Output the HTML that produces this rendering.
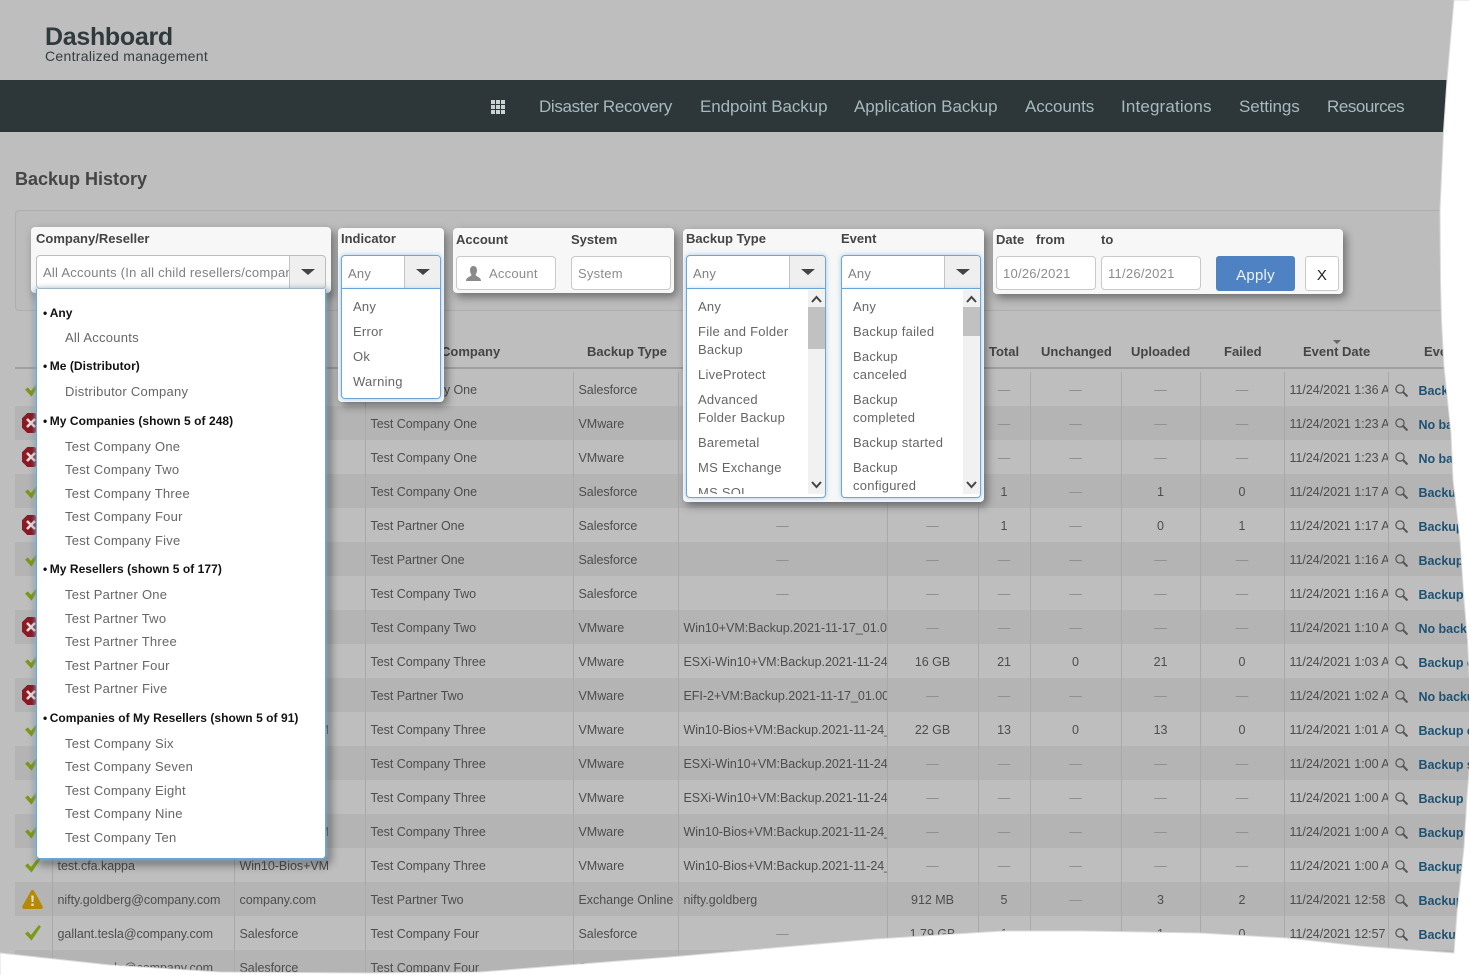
<!DOCTYPE html>
<html lang="en"><head><meta charset="utf-8"><title>Backup History</title>
<style>
html,body{margin:0;padding:0;background:#fff}
#p{position:relative;width:1469px;height:975px;overflow:hidden;background:#bebebe;font:13px/16px "Liberation Sans",sans-serif;letter-spacing:.25px;color:#4a4a4a}
.a,.t,.b,.l{position:absolute;white-space:nowrap}
.t{margin-top:1px}
.l{font-weight:bold;color:#444;font-size:13px;letter-spacing:0}
.b{font-weight:bold;color:#111;font-size:12px;letter-spacing:.05px;left:43px}
.g{color:#666}
#nav{left:0;top:80px;width:1469px;height:52px;background:#2d3739}
.n{position:absolute;top:97px;font-size:17px;line-height:20px;color:#a6babd;letter-spacing:0;white-space:nowrap}
table{position:absolute;left:15px;top:372px;border-collapse:collapse;table-layout:fixed;width:1455px;font-size:12.5px;letter-spacing:-.03px}
td{height:34px;padding:2px 0 0 5px;overflow:hidden;white-space:nowrap;border-right:1px solid #a9a9a9;box-sizing:border-box;color:#4d4d4d}
td:first-child{padding:0;overflow:visible}
tr:nth-child(even) td{background:#b4b4b4}
td.c{text-align:center;padding:2px 0 0}
td.m{color:#8a8a8a}
td:last-child{border:0;padding:2px 0 0 6px}
td svg{vertical-align:middle}
td b{color:#1e5273;margin-left:11px;font-size:12.5px;position:relative;top:1px}
.pn{position:absolute;background:#f7f7f7;border-radius:4px;box-shadow:3px 4px 9px rgba(0,0,0,.42)}
.sel{position:absolute;box-sizing:border-box;height:34px;background:#fff;border:1px solid #bdbdbd;border-radius:4px;overflow:hidden;color:#808080}
.sel.on{border-color:#6fa5d2;box-shadow:0 0 5px rgba(90,165,230,.55);border-radius:4px 4px 0 0}
.sel span{position:absolute;top:10px;white-space:nowrap}
.sel i{position:absolute;right:0;top:0;bottom:0;width:35px;background:#efefef;border-left:1px solid #c4c4c4}
.sel i:after{content:"";position:absolute;left:11px;top:13px;border:7px solid transparent;border-top:6px solid #444;border-bottom:0}
.dd{position:absolute;box-sizing:border-box;background:#fff;border:1px solid #6fa5d2;border-top:0;border-radius:0 0 4px 4px;box-shadow:0 0 5px rgba(90,165,230,.55)}
.inp{position:absolute;box-sizing:border-box;height:34px;top:256px;width:100px;background:#fff;border:1px solid #c9c9c9;border-radius:4px;color:#8c8c8c}
.inp span{position:absolute;top:9px;left:6px;white-space:nowrap}
.sb{position:absolute;left:808px;top:290px;width:17px;height:204px;background:#f1f1f1}
.th{position:absolute;left:0;top:17px;width:17px;background:#c1c1c1}
</style></head><body>
<div id="p">
<svg width="0" height="0" style="position:absolute"><defs>
<symbol id="ok" viewBox="0 0 16 16"><path fill="#7d9a14" d="M0 8.600 2.800 6.400 6 10 13.800 0 16 1.600 6.500 15.600Z"/></symbol>
<symbol id="er" viewBox="0 0 18 20"><path fill="#8a1a24" d="M5.300 0H12.700L18 5.300V14.700L12.700 20H5.300L0 14.700V5.300Z"/><path stroke="#e9dede" stroke-width="2.600" d="M5 6 13 14M13 6 5 14"/></symbol>
<symbol id="wn" viewBox="0 0 21 19"><path fill="#b48a04" d="M10.500 0C11.300 0 11.900.5 12.300 1.200L20.600 16.200C21.300 17.500 20.400 19 19 19H2C.6 19-.3 17.500.4 16.200L8.700 1.200C9.100.5 9.700 0 10.500 0Z"/><path fill="#e4dcc4" d="M9.200 5.500H11.800L11.400 12H9.600ZM9.300 13.500H11.700V16H9.300Z"/></symbol>
<symbol id="se" viewBox="0 0 13 13"><circle cx="5" cy="5" r="4.100" fill="none" stroke="#555" stroke-width="1.200"/><path stroke="#555" stroke-width="2" d="M8 8 12.500 12.500"/></symbol>
</defs></svg>

<div class="a" style="left:45px;top:22px;font-size:25px;line-height:30px;font-weight:bold;color:#2f3a3d;letter-spacing:-.3px">Dashboard</div>
<div class="a" style="left:45px;top:48px;font-size:14px;line-height:17px;color:#333d40;letter-spacing:.3px">Centralized management</div>
<div class="a" id="nav"></div>
<svg class="a" style="left:491px;top:100px" width="14" height="14"><path fill="#c9d1d2" d="M0 0h4v4H0zM5 0h4v4H5zM10 0h4v4h-4zM0 5h4v4H0zM5 5h4v4H5zM10 5h4v4h-4zM0 10h4v4H0zM5 10h4v4H5zM10 10h4v4h-4z"/></svg>
<span class="n" style="left:539px;letter-spacing:-.35px">Disaster Recovery</span>
<span class="n" style="left:700px;letter-spacing:-.07px">Endpoint Backup</span>
<span class="n" style="left:854px;letter-spacing:-.06px">Application Backup</span>
<span class="n" style="left:1025px;letter-spacing:-.1px">Accounts</span>
<span class="n" style="left:1121px;letter-spacing:.15px">Integrations</span>
<span class="n" style="left:1239px;letter-spacing:-.1px">Settings</span>
<span class="n" style="left:1327px;letter-spacing:-.45px">Resources</span>

<div class="a" style="left:15px;top:168px;font-size:18px;line-height:22px;font-weight:bold;color:#454545;letter-spacing:0">Backup History</div>
<div class="a" style="left:15px;top:210px;width:1460px;height:101px;box-sizing:border-box;border:1px solid #aeaeae;border-radius:4px;background:#bcbcbc"></div>

<span class="l" style="left:441px;top:344px">Company</span>
<span class="l" style="left:587px;top:344px">Backup Type</span>
<span class="l" style="left:989px;top:344px">Total</span>
<span class="l" style="left:1041px;top:344px">Unchanged</span>
<span class="l" style="left:1131px;top:344px">Uploaded</span>
<span class="l" style="left:1224px;top:344px">Failed</span>
<span class="l" style="left:1303px;top:344px">Event Date</span>
<span class="l" style="left:1424px;top:344px">Event</span>
<div class="a" style="left:1333px;top:340px;border:4px solid transparent;border-top:4px solid #666;border-bottom:0"></div>
<div class="a" style="left:15px;top:367px;width:1460px;height:2px;background:#9f9f9f"></div>

<table><colgroup><col style="width:37px"><col style="width:182px"><col style="width:131px"><col style="width:208px"><col style="width:105px"><col style="width:209px"><col style="width:91px"><col style="width:52px"><col style="width:91px"><col style="width:79px"><col style="width:84px"><col style="width:104px"><col style="width:82px"></colgroup>
<tr><td><svg style="margin-left:10px" width="16" height="16"><use href="#ok"/></svg></td><td></td><td></td><td>Test Company One</td><td>Salesforce</td><td class="c m">—</td><td class="c m">—</td><td class="c m">—</td><td class="c m">—</td><td class="c m">—</td><td class="c m">—</td><td>11/24/2021 1:36 AM</td><td><svg width="13" height="13"><use href="#se"/></svg><b>Backup completed</b></td></tr>
<tr><td><svg style="margin-left:7px" width="18" height="20"><use href="#er"/></svg></td><td></td><td></td><td>Test Company One</td><td>VMware</td><td>Win10+VM:Backup.2021-11-17_01.00</td><td class="c m">—</td><td class="c m">—</td><td class="c m">—</td><td class="c m">—</td><td class="c m">—</td><td>11/24/2021 1:23 AM</td><td><svg width="13" height="13"><use href="#se"/></svg><b>No backup</b></td></tr>
<tr><td><svg style="margin-left:7px" width="18" height="20"><use href="#er"/></svg></td><td></td><td></td><td>Test Company One</td><td>VMware</td><td>Win10+VM:Backup.2021-11-17_01.00</td><td class="c m">—</td><td class="c m">—</td><td class="c m">—</td><td class="c m">—</td><td class="c m">—</td><td>11/24/2021 1:23 AM</td><td><svg width="13" height="13"><use href="#se"/></svg><b>No backup</b></td></tr>
<tr><td><svg style="margin-left:10px" width="16" height="16"><use href="#ok"/></svg></td><td></td><td></td><td>Test Company One</td><td>Salesforce</td><td class="c m">—</td><td class="c m">—</td><td class="c">1</td><td class="c m">—</td><td class="c">1</td><td class="c">0</td><td>11/24/2021 1:17 AM</td><td><svg width="13" height="13"><use href="#se"/></svg><b>Backup completed</b></td></tr>
<tr><td><svg style="margin-left:7px" width="18" height="20"><use href="#er"/></svg></td><td></td><td></td><td>Test Partner One</td><td>Salesforce</td><td class="c m">—</td><td class="c m">—</td><td class="c">1</td><td class="c m">—</td><td class="c">0</td><td class="c">1</td><td>11/24/2021 1:17 AM</td><td><svg width="13" height="13"><use href="#se"/></svg><b>Backup completed</b></td></tr>
<tr><td><svg style="margin-left:10px" width="16" height="16"><use href="#ok"/></svg></td><td></td><td></td><td>Test Partner One</td><td>Salesforce</td><td class="c m">—</td><td class="c m">—</td><td class="c m">—</td><td class="c m">—</td><td class="c m">—</td><td class="c m">—</td><td>11/24/2021 1:16 AM</td><td><svg width="13" height="13"><use href="#se"/></svg><b>Backup started</b></td></tr>
<tr><td><svg style="margin-left:10px" width="16" height="16"><use href="#ok"/></svg></td><td></td><td></td><td>Test Company Two</td><td>Salesforce</td><td class="c m">—</td><td class="c m">—</td><td class="c m">—</td><td class="c m">—</td><td class="c m">—</td><td class="c m">—</td><td>11/24/2021 1:16 AM</td><td><svg width="13" height="13"><use href="#se"/></svg><b>Backup started</b></td></tr>
<tr><td><svg style="margin-left:7px" width="18" height="20"><use href="#er"/></svg></td><td></td><td></td><td>Test Company Two</td><td>VMware</td><td>Win10+VM:Backup.2021-11-17_01.00</td><td class="c m">—</td><td class="c m">—</td><td class="c m">—</td><td class="c m">—</td><td class="c m">—</td><td>11/24/2021 1:10 AM</td><td><svg width="13" height="13"><use href="#se"/></svg><b>No backup</b></td></tr>
<tr><td><svg style="margin-left:10px" width="16" height="16"><use href="#ok"/></svg></td><td></td><td></td><td>Test Company Three</td><td>VMware</td><td>ESXi-Win10+VM:Backup.2021-11-24_01</td><td class="c">16 GB</td><td class="c">21</td><td class="c">0</td><td class="c">21</td><td class="c">0</td><td>11/24/2021 1:03 AM</td><td><svg width="13" height="13"><use href="#se"/></svg><b>Backup completed</b></td></tr>
<tr><td><svg style="margin-left:7px" width="18" height="20"><use href="#er"/></svg></td><td></td><td></td><td>Test Partner Two</td><td>VMware</td><td>EFI-2+VM:Backup.2021-11-17_01.00.00</td><td class="c m">—</td><td class="c m">—</td><td class="c m">—</td><td class="c m">—</td><td class="c m">—</td><td>11/24/2021 1:02 AM</td><td><svg width="13" height="13"><use href="#se"/></svg><b>No backup</b></td></tr>
<tr><td><svg style="margin-left:10px" width="16" height="16"><use href="#ok"/></svg></td><td></td><td>Win10-Bios+VM</td><td>Test Company Three</td><td>VMware</td><td>Win10-Bios+VM:Backup.2021-11-24_01</td><td class="c">22 GB</td><td class="c">13</td><td class="c">0</td><td class="c">13</td><td class="c">0</td><td>11/24/2021 1:01 AM</td><td><svg width="13" height="13"><use href="#se"/></svg><b>Backup completed</b></td></tr>
<tr><td><svg style="margin-left:10px" width="16" height="16"><use href="#ok"/></svg></td><td></td><td></td><td>Test Company Three</td><td>VMware</td><td>ESXi-Win10+VM:Backup.2021-11-24_01</td><td class="c m">—</td><td class="c m">—</td><td class="c m">—</td><td class="c m">—</td><td class="c m">—</td><td>11/24/2021 1:00 AM</td><td><svg width="13" height="13"><use href="#se"/></svg><b>Backup started</b></td></tr>
<tr><td><svg style="margin-left:10px" width="16" height="16"><use href="#ok"/></svg></td><td></td><td></td><td>Test Company Three</td><td>VMware</td><td>ESXi-Win10+VM:Backup.2021-11-24_01</td><td class="c m">—</td><td class="c m">—</td><td class="c m">—</td><td class="c m">—</td><td class="c m">—</td><td>11/24/2021 1:00 AM</td><td><svg width="13" height="13"><use href="#se"/></svg><b>Backup started</b></td></tr>
<tr><td><svg style="margin-left:10px" width="16" height="16"><use href="#ok"/></svg></td><td></td><td>Win10-Bios+VM</td><td>Test Company Three</td><td>VMware</td><td>Win10-Bios+VM:Backup.2021-11-24_01</td><td class="c m">—</td><td class="c m">—</td><td class="c m">—</td><td class="c m">—</td><td class="c m">—</td><td>11/24/2021 1:00 AM</td><td><svg width="13" height="13"><use href="#se"/></svg><b>Backup started</b></td></tr>
<tr><td><svg style="margin-left:10px" width="16" height="16"><use href="#ok"/></svg></td><td>test.cfa.kappa</td><td>Win10-Bios+VM</td><td>Test Company Three</td><td>VMware</td><td>Win10-Bios+VM:Backup.2021-11-24_01</td><td class="c m">—</td><td class="c m">—</td><td class="c m">—</td><td class="c m">—</td><td class="c m">—</td><td>11/24/2021 1:00 AM</td><td><svg width="13" height="13"><use href="#se"/></svg><b>Backup started</b></td></tr>
<tr><td><svg style="margin-left:7px" width="21" height="19"><use href="#wn"/></svg></td><td>nifty.goldberg@company.com</td><td>company.com</td><td>Test Partner Two</td><td>Exchange Online</td><td>nifty.goldberg</td><td class="c">912 MB</td><td class="c">5</td><td class="c m">—</td><td class="c">3</td><td class="c">2</td><td>11/24/2021 12:58 AM</td><td><svg width="13" height="13"><use href="#se"/></svg><b>Backup completed</b></td></tr>
<tr><td><svg style="margin-left:10px" width="16" height="16"><use href="#ok"/></svg></td><td>gallant.tesla@company.com</td><td>Salesforce</td><td>Test Company Four</td><td>Salesforce</td><td class="c m">—</td><td class="c">1.79 GB</td><td class="c">1</td><td class="c m">—</td><td class="c">1</td><td class="c">0</td><td>11/24/2021 12:57 AM</td><td><svg width="13" height="13"><use href="#se"/></svg><b>Backup completed</b></td></tr>
<tr><td></td><td>gallant.tesla@company.com</td><td>Salesforce</td><td>Test Company Four</td><td>Salesforce</td><td class="c m">—</td><td class="c">1.79 GB</td><td class="c">1</td><td class="c m">—</td><td class="c">1</td><td class="c">0</td><td>11/24/2021 12:57 AM</td><td><svg width="13" height="13"><use href="#se"/></svg><b>Backup completed</b></td></tr>
</table>

<!-- Company/Reseller -->
<div class="pn" style="left:31px;top:227px;width:300px;height:66px"></div>
<span class="l" style="left:36px;top:231px">Company/Reseller</span>
<div class="sel" style="left:36px;top:255px;width:290px"><span style="left:6px;top:9px;width:246px;overflow:hidden">All Accounts (In all child resellers/companies)</span><i></i></div>
<div class="dd" style="left:36px;top:289px;width:290px;height:570px;box-shadow:0 0 4px 1px rgba(150,200,240,.7),3px 4px 9px 2px rgba(0,0,0,.4)"></div>
<span class="b" style="top:305px">•&thinsp;Any</span>
<span class="t g" style="left:65px;top:329px">All Accounts</span>
<span class="b" style="top:358px">•&thinsp;Me (Distributor)</span>
<span class="t g" style="left:65px;top:383px">Distributor Company</span>
<span class="b" style="top:413px">•&thinsp;My Companies (shown 5 of 248)</span>
<span class="t g" style="left:65px;top:438px">Test Company One</span>
<span class="t g" style="left:65px;top:461px">Test Company Two</span>
<span class="t g" style="left:65px;top:485px">Test Company Three</span>
<span class="t g" style="left:65px;top:508px">Test Company Four</span>
<span class="t g" style="left:65px;top:532px">Test Company Five</span>
<span class="b" style="top:561px">•&thinsp;My Resellers (shown 5 of 177)</span>
<span class="t g" style="left:65px;top:586px">Test Partner One</span>
<span class="t g" style="left:65px;top:610px">Test Partner Two</span>
<span class="t g" style="left:65px;top:633px">Test Partner Three</span>
<span class="t g" style="left:65px;top:657px">Test Partner Four</span>
<span class="t g" style="left:65px;top:680px">Test Partner Five</span>
<span class="b" style="top:710px">•&thinsp;Companies of My Resellers (shown 5 of 91)</span>
<span class="t g" style="left:65px;top:735px">Test Company Six</span>
<span class="t g" style="left:65px;top:758px">Test Company Seven</span>
<span class="t g" style="left:65px;top:782px">Test Company Eight</span>
<span class="t g" style="left:65px;top:805px">Test Company Nine</span>
<span class="t g" style="left:65px;top:829px">Test Company Ten</span>

<!-- Indicator -->
<div class="pn" style="left:338px;top:228px;width:106px;height:174px"></div>
<span class="l" style="left:341px;top:231px">Indicator</span>
<div class="sel on" style="left:341px;top:255px;width:100px"><span style="left:6px">Any</span><i></i></div>
<div class="dd" style="left:341px;top:289px;width:100px;height:110px"></div>
<span class="t g" style="left:353px;top:298px">Any</span>
<span class="t g" style="left:353px;top:323px">Error</span>
<span class="t g" style="left:353px;top:348px">Ok</span>
<span class="t g" style="left:353px;top:373px">Warning</span>

<!-- Account/System -->
<div class="pn" style="left:453px;top:228px;width:221px;height:65px"></div>
<span class="l" style="left:456px;top:232px">Account</span>
<span class="l" style="left:571px;top:232px">System</span>
<div class="inp" style="left:456px"><svg class="a" style="left:9px;top:9px" width="15" height="15"><path fill="#8a8a8a" d="M7.500 0C10 0 11 2 11 4.500 11 6.500 10 8 9.500 9 10 10.500 15 11 15 15H0C0 11 5 10.500 5.500 9 5 8 4 6.500 4 4.500 4 2 5 0 7.500 0Z"/></svg><span style="left:32px">Account</span></div>
<div class="inp" style="left:571px"><span>System</span></div>

<!-- Backup Type / Event -->
<div class="pn" style="left:683px;top:229px;width:301px;height:273px"></div>
<span class="l" style="left:686px;top:231px">Backup Type</span>
<span class="l" style="left:841px;top:231px">Event</span>
<div class="sel on" style="left:686px;top:255px;width:140px"><span style="left:6px">Any</span><i></i></div>
<div class="dd" style="left:686px;top:289px;width:140px;height:209px;overflow:hidden"></div>
<div class="sel on" style="left:841px;top:255px;width:140px"><span style="left:6px">Any</span><i></i></div>
<div class="dd" style="left:841px;top:289px;width:140px;height:209px;overflow:hidden"></div>
<div class="a" style="left:687px;top:290px;width:121px;height:204px;overflow:hidden">
<span class="t g" style="left:11px;top:8px">Any</span>
<span class="t g" style="left:11px;top:33px">File and Folder</span>
<span class="t g" style="left:11px;top:51px">Backup</span>
<span class="t g" style="left:11px;top:76px">LiveProtect</span>
<span class="t g" style="left:11px;top:101px">Advanced</span>
<span class="t g" style="left:11px;top:119px">Folder Backup</span>
<span class="t g" style="left:11px;top:144px">Baremetal</span>
<span class="t g" style="left:11px;top:169px">MS Exchange</span>
<span class="t g" style="left:11px;top:194px">MS SQL</span>
</div>
<div class="a" style="left:842px;top:290px;width:121px;height:204px;overflow:hidden">
<span class="t g" style="left:11px;top:8px">Any</span>
<span class="t g" style="left:11px;top:33px">Backup failed</span>
<span class="t g" style="left:11px;top:58px">Backup</span>
<span class="t g" style="left:11px;top:76px">canceled</span>
<span class="t g" style="left:11px;top:101px">Backup</span>
<span class="t g" style="left:11px;top:119px">completed</span>
<span class="t g" style="left:11px;top:144px">Backup started</span>
<span class="t g" style="left:11px;top:169px">Backup</span>
<span class="t g" style="left:11px;top:187px">configured</span>
</div>
<div class="sb"><div class="th" style="height:42px"></div><svg class="a" style="left:3px;top:4px" width="11" height="196"><path fill="none" stroke="#444" stroke-width="2" d="M1 8 5.500 3 10 8M1 188 5.500 193 10 188"/></svg></div>
<div class="sb" style="left:963px"><div class="th" style="height:29px"></div><svg class="a" style="left:3px;top:4px" width="11" height="196"><path fill="none" stroke="#444" stroke-width="2" d="M1 8 5.500 3 10 8M1 188 5.500 193 10 188"/></svg></div>

<!-- Date -->
<div class="pn" style="left:993px;top:229px;width:350px;height:65px"></div>
<span class="l" style="left:996px;top:232px">Date</span>
<span class="l" style="left:1036px;top:232px">from</span>
<span class="l" style="left:1101px;top:232px">to</span>
<div class="inp" style="left:996px"><span>10/26/2021</span></div>
<div class="inp" style="left:1101px"><span>11/26/2021</span></div>
<div class="a" style="left:1216px;top:256px;width:79px;height:35px;border-radius:3px;background:#4f82c2;color:#eef3fa;font-size:15px;line-height:40px;text-align:center">Apply</div>
<div class="a" style="left:1305px;top:256px;width:34px;height:35px;box-sizing:border-box;border:1px solid #c9c9c9;border-radius:3px;background:#fff;color:#222;font-size:15px;line-height:38px;text-align:center">X</div>

<!-- Page curl -->
<svg class="a" style="left:0;top:0" width="1469" height="975"><path fill="#fff" stroke="#dcdcdc" stroke-width="1" d="M1454 0 1447 80 1443.500 132 1440 210 1440.500 280 1441.500 320 1444 367 1451 433 1453 480 1460 540 1464 600 1467.500 640 1470 690 1470 760 1467 797 1464 847 1460.500 880 1457 913 1454 953 1360 946 1287 938 1200 933 1083 931 1003 931 875 939 670 957 480 972 367 973 220 972 110 965 0 953V976H1470V0Z"/></svg>
</div>
</body></html>
